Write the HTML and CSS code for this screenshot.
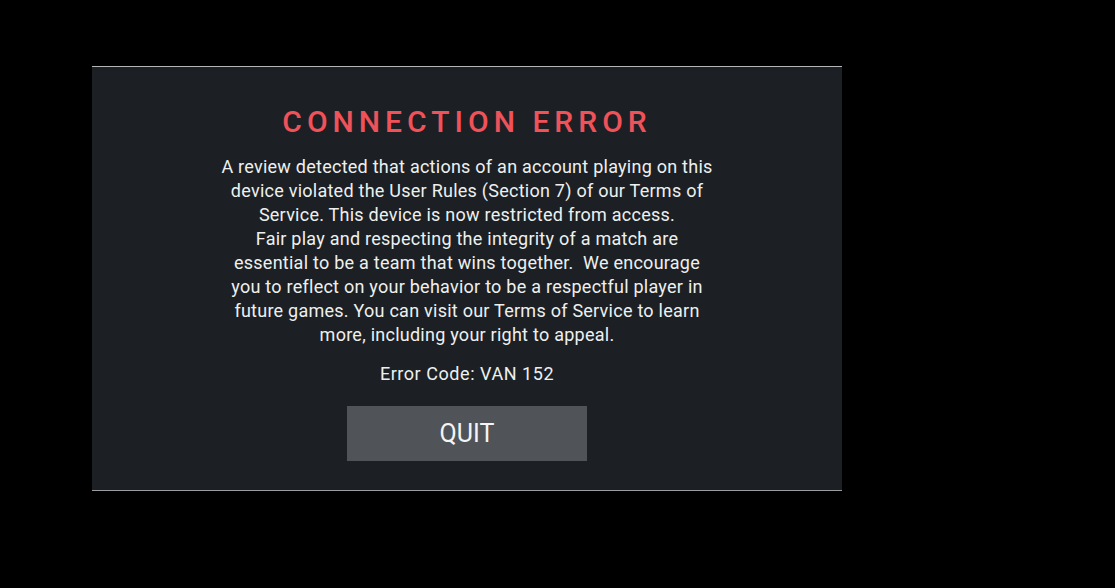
FILE: index.html
```html
<!DOCTYPE html>
<html lang="en">
<head>
<meta charset="utf-8">
<title>Connection Error</title>
<link rel="stylesheet" href="styles.css">
</head>
<body>
<div class="stage">
  <div class="dialog">
    <h1 class="title">CONNECTION ERROR</h1>
    <p class="message">A review detected that actions of an account playing on this<br>device violated the User Rules (Section 7) of our Terms of<br>Service. This device is now restricted from access.<br>Fair play and respecting the integrity of a match are<br>essential to be a team that wins together.&nbsp; We encourage<br>you to reflect on your behavior to be a respectful player in<br>future games. You can visit our Terms of Service to learn<br>more, including your right to appeal.</p>
    <p class="code">Error Code: VAN 152</p>
    <button class="quit">QUIT</button>
  </div>
</div>
</body>
</html>
```
FILE: styles.css
```css
html, body {
  margin: 0;
  padding: 0;
  background: #000;
  width: 1115px;
  height: 588px;
  overflow: hidden;
}
.stage {
  padding: 66px 0 0 92px;
}
.dialog {
  width: 750px;
  height: 423px;
  background: #1c2024;
  border-top: 1px solid #b4b6b8;
  border-bottom: 1px solid #9a9c9e;
  display: flex;
  flex-direction: column;
  align-items: center;
  font-family: Roboto, "Liberation Sans", sans-serif;
  color: #eef0f0;
}
.title {
  margin: 37px 0 0;
  font-size: 30px;
  font-weight: 500;
  letter-spacing: 5px;
  color: #f0525a;
  line-height: 36px;
}
.message {
  margin: 15px 0 0;
  font-size: 18px;
  letter-spacing: 0.25px;
  line-height: 24px;
  text-align: center;
}
.code {
  margin: 15px 0 0;
  font-size: 18px;
  letter-spacing: 0.55px;
  line-height: 24px;
}
.quit {
  margin-top: 20px;
  width: 240px;
  height: 55px;
  border: none;
  background: #505458;
  color: #f4f4f4;
  font-family: Roboto, "Liberation Sans", sans-serif;
  font-size: 25px;
  padding: 0;
}
```
